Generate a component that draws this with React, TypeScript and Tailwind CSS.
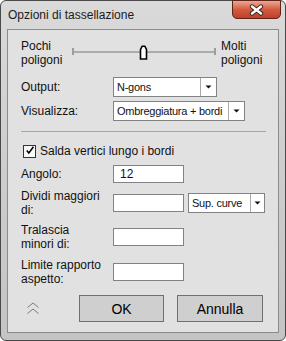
const Arrow = () => (
  <svg width="7" height="4" viewBox="0 0 7 4">
    <path d="M0.5 0.5 H6.5 L3.5 3.5 Z" fill="#111" />
  </svg>
);

function Combo({ text, width, btn = 16 }: { text: string; width: number; btn?: number }) {
  return (
    <div
      className="flex h-[20px] items-stretch border border-[#828282] bg-white"
      style={{ width }}
    >
      <span className="flex flex-1 items-center overflow-hidden whitespace-nowrap pl-[3px] text-[11px] leading-[13px] tracking-[-0.25px]">
        {text}
      </span>
      <span
        className="flex items-center justify-center border-l border-[#a9a9a9]"
        style={{ width: btn }}
      >
        <Arrow />
      </span>
    </div>
  );
}

const Field = ({ value = "" }: { value?: string }) => (
  <div className="flex h-[18px] w-[71px] items-center border border-[#828282] bg-white pl-[6px] text-[12px] leading-[14px]">
    {value}
  </div>
);

const Label = ({ children }: { children: React.ReactNode }) => (
  <span className="w-[92px] shrink-0 text-[12px] leading-[14px]">{children}</span>
);

export default function App() {
  return (
    <div className="h-[341px] w-[286px] font-['Liberation_Sans',Arial,sans-serif] text-[#111]">
      <div className="flex h-full flex-col rounded-[6px] border border-[#4a4a4a] bg-gradient-to-b from-[#dadada] via-[#cdcdcd] to-[#c4c4c4] px-[6px] pb-[7px]">
        {/* Title bar */}
        <div className="flex h-[28px] items-start justify-between">
          <span className="ml-[1px] mt-[7px] text-[12px] leading-[14px] text-[#1b1b1b]">
            Opzioni di tassellazione
          </span>
          <div className="-mr-[2px] -mt-[1px] flex h-[19px] w-[49px] items-center justify-center rounded-b-[5px] border border-[#5e2418] bg-gradient-to-b from-[#eaa895] via-[#d45a3f] to-[#c03f28]">
            <svg width="15" height="12" viewBox="0 0 15 12">
              <path d="M3 2.5 L12 9.5 M12 2.5 L3 9.5" stroke="#3b2a26" strokeWidth="4.4" strokeLinecap="round" />
              <path d="M3 2.5 L12 9.5 M12 2.5 L3 9.5" stroke="#fff" strokeWidth="2.4" strokeLinecap="round" />
            </svg>
          </div>
        </div>

        {/* Content panel */}
        <div className="flex flex-1 flex-col border border-[#8b8b8b] bg-[#e1e1e1] pl-[13px] pr-[12px] pt-[9px]">
          {/* Slider */}
          <div className="flex items-start">
            <span className="w-[51px] shrink-0 text-[12px] leading-[14px]">
              Pochi
              <br />
              poligoni
            </span>
            <div className="relative h-[28px] w-[144px] shrink-0">
              <div className="absolute left-0 right-0 top-[12px] h-[2px] bg-[#ababab]" />
              <div className="absolute left-0 top-[9px] h-[7px] w-[2px] bg-[#9d9d9d]" />
              <div className="absolute right-0 top-[9px] h-[7px] w-[2px] bg-[#9d9d9d]" />
              <svg className="absolute left-[67px] top-[6px]" width="9" height="15" viewBox="0 0 9 15">
                <path d="M1.5 14 V4.5 L3.2 1.2 H5.8 L7.5 4.5 V14 Z" fill="#fff" stroke="#000" strokeWidth="1.6" />
              </svg>
            </div>
            <span className="ml-[5px] text-[12px] leading-[14px]">
              Molti
              <br />
              poligoni
            </span>
          </div>

          {/* Output */}
          <div className="mt-[10px] flex items-center">
            <Label>Output:</Label>
            <Combo text="N-gons" width={104} />
          </div>

          {/* Visualizza */}
          <div className="mt-[4px] flex items-center">
            <Label>Visualizza:</Label>
            <Combo text="Ombreggiatura + bordi" width={132} />
          </div>

          <div className="mt-[10px] h-px bg-[#a6a6a6]" />

          {/* Checkbox */}
          <div className="mt-[12px] flex items-center">
            <div className="ml-[2px] flex h-[13px] w-[13px] items-center justify-center border border-[#333] bg-gradient-to-br from-[#f2f2f2] to-white">
              <svg width="13" height="13" viewBox="0 0 13 13" className="-mt-[2px] ml-[1px]">
                <path d="M2.3 6.5 L5 9.8 L11 1.6" fill="none" stroke="#000" strokeWidth="2" />
              </svg>
            </div>
            <span className="ml-[4px] text-[12px] leading-[14px]">Salda vertici lungo i bordi</span>
          </div>

          {/* Angolo */}
          <div className="mt-[7px] flex h-[18px] items-center">
            <Label>Angolo:</Label>
            <Field value="12" />
          </div>

          {/* Dividi */}
          <div className="mt-[6px] flex items-center">
            <Label>
              Dividi maggiori
              <br />
              di:
            </Label>
            <Field />
            <div className="ml-[4px]">
              <Combo text="Sup. curve" width={77} btn={14} />
            </div>
          </div>

          {/* Tralascia */}
          <div className="mt-[6px] flex items-center">
            <Label>
              Tralascia
              <br />
              minori di:
            </Label>
            <Field />
          </div>

          {/* Limite */}
          <div className="mt-[7px] flex items-center">
            <Label>
              Limite rapporto
              <br />
              aspetto:
            </Label>
            <Field />
          </div>

          {/* Buttons */}
          <div className="mt-[9px] flex items-center">
            <svg className="ml-[5px]" width="14" height="13" viewBox="0 0 14 13">
              <path d="M1.5 5.5 L7 1 L12.5 5.5 M1.5 11.5 L7 7 L12.5 11.5" fill="none" stroke="#7a7a7a" strokeWidth="1" />
            </svg>
            <button className="ml-[39px] flex h-[27px] w-[85px] items-center justify-center border border-[#707070] bg-[#cfcfcf] text-[14px] leading-[16px] text-black">
              OK
            </button>
            <button className="ml-[13px] flex h-[27px] w-[86px] items-center justify-center border border-[#707070] bg-[#cfcfcf] text-[14px] leading-[16px] text-black">
              Annulla
            </button>
          </div>
        </div>
      </div>
    </div>
  );
}
